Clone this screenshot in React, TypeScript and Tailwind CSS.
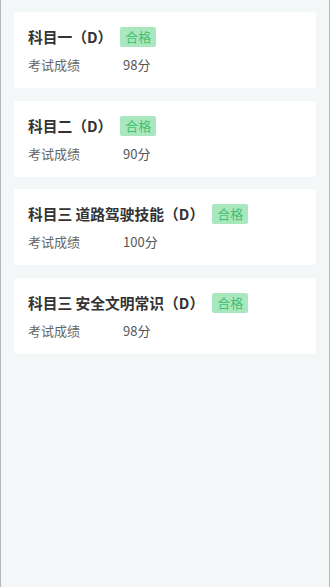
import React from 'react';

interface ExamResult {
  subject: string;
  score: number;
  passed: boolean;
}

const results: ExamResult[] = [
  { subject: '科目一（D）', score: 98, passed: true },
  { subject: '科目二（D）', score: 90, passed: true },
  { subject: '科目三 道路驾驶技能（D）', score: 100, passed: true },
  { subject: '科目三 安全文明常识（D）', score: 98, passed: true },
];

function ResultCard({ item }: { item: ExamResult }) {
  return (
    <div className="bg-white rounded-[3px] h-[76px] pl-[14px] pr-3 pt-[15px]">
      <div className="flex items-center h-5">
        <span className="text-[14.75px] font-bold text-[#333] leading-5">{item.subject}</span>
        {item.passed && (
          <span className="ml-2 h-5 px-[5px] flex items-center bg-[#a9e8bf] text-[#45bf72] text-[13px] leading-5 rounded-[2px]">
            合格
          </span>
        )}
      </div>
      <div className="flex items-center mt-[9px] text-[13px] leading-[18px]">
        <span className="w-[95px] text-[#666]">考试成绩</span>
        <span className="text-[#555]">{item.score}分</span>
      </div>
    </div>
  );
}

export default function App() {
  return (
    <div
      className="w-[330px] h-[587px] bg-[#f4f7f8] border-x-[1.5px] border-[#b5b9bb] px-[13px] pt-3 flex flex-col gap-[12.5px]"
      style={{ fontFamily: '"Noto Sans CJK SC", "Noto Sans", sans-serif' }}
    >
      {results.map((item) => (
        <ResultCard key={item.subject} item={item} />
      ))}
    </div>
  );
}
